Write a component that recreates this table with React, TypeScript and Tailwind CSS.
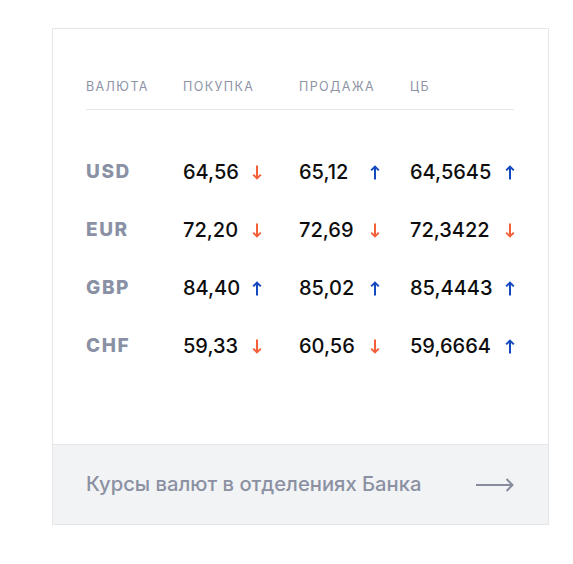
import React from "react";

type Dir = "up" | "down";

const Arrow = ({ dir }: { dir: Dir }) => {
  const color = dir === "up" ? "#1448bf" : "#f5603b";
  return (
    <svg width="10" height="15" viewBox="0 0 10 15" fill="none" className="shrink-0">
      {dir === "down" ? (
        <>
          <path d="M5 0.5 V13.5" stroke={color} strokeWidth="2" />
          <path d="M1.2 9.6 L5 13.4 L8.8 9.6" stroke={color} strokeWidth="2" />
        </>
      ) : (
        <>
          <path d="M5 1.5 V14.5" stroke={color} strokeWidth="2" />
          <path d="M1.2 5.4 L5 1.6 L8.8 5.4" stroke={color} strokeWidth="2" />
        </>
      )}
    </svg>
  );
};

const rows: { code: string; vals: [string, Dir][] }[] = [
  { code: "USD", vals: [["64,56", "down"], ["65,12", "up"], ["64,5645", "up"]] },
  { code: "EUR", vals: [["72,20", "down"], ["72,69", "down"], ["72,3422", "down"]] },
  { code: "GBP", vals: [["84,40", "up"], ["85,02", "up"], ["85,4443", "up"]] },
  { code: "CHF", vals: [["59,33", "down"], ["60,56", "down"], ["59,6664", "up"]] },
];

const widths = ["w-[69px]", "w-[71px]", "w-[95px]"];

export default function App() {
  return (
    <div className="min-h-[564px] w-[573px] bg-white pt-[28px] pl-[52px]" style={{ fontFamily: "Inter, 'Noto Sans', sans-serif" }}>
      <div className="w-[497px] h-[497px] border border-[#e4e6ea] flex flex-col">
        <div className="pl-[33px] pr-[34px]">
          <div className="pt-[50px] pb-[14px] border-b border-[#e6e8ec] grid grid-cols-[97px_116px_111px_1fr] text-[12.5px] leading-[16px] tracking-[1.4px] text-[#8e94a6]">
            <div>ВАЛЮТА</div>
            <div>ПОКУПКА</div>
            <div>ПРОДАЖА</div>
            <div>ЦБ</div>
          </div>
          <div className="pt-[33px]">
            {rows.map((r) => (
              <div key={r.code} className="h-[58px] grid grid-cols-[97px_116px_111px_1fr] items-center">
                <div className="text-[19px] font-extrabold tracking-[1.6px] text-[#8a91a5]">{r.code}</div>
                {r.vals.map(([v, d], i) => (
                  <div key={i} className="flex items-center">
                    <span className={`${widths[i]} text-[20px] font-medium text-[#0d0d0d]`}>{v}</span>
                    <Arrow dir={d} />
                  </div>
                ))}
              </div>
            ))}
          </div>
        </div>
        <div className="mt-auto h-[80px] border-t border-[#e4e6ea] bg-[#f2f3f5] flex items-center justify-between pl-[33px] pr-[34px]">
          <span className="text-[20.2px] font-medium text-[#8b91a2]">Курсы валют в отделениях Банка</span>
          <svg width="38" height="16" viewBox="0 0 38 16" fill="none">
            <path d="M0 8 H36.5" stroke="#868c9c" strokeWidth="2" />
            <path d="M30.5 2 L36.5 8 L30.5 14" stroke="#868c9c" strokeWidth="2" />
          </svg>
        </div>
      </div>
    </div>
  );
}
